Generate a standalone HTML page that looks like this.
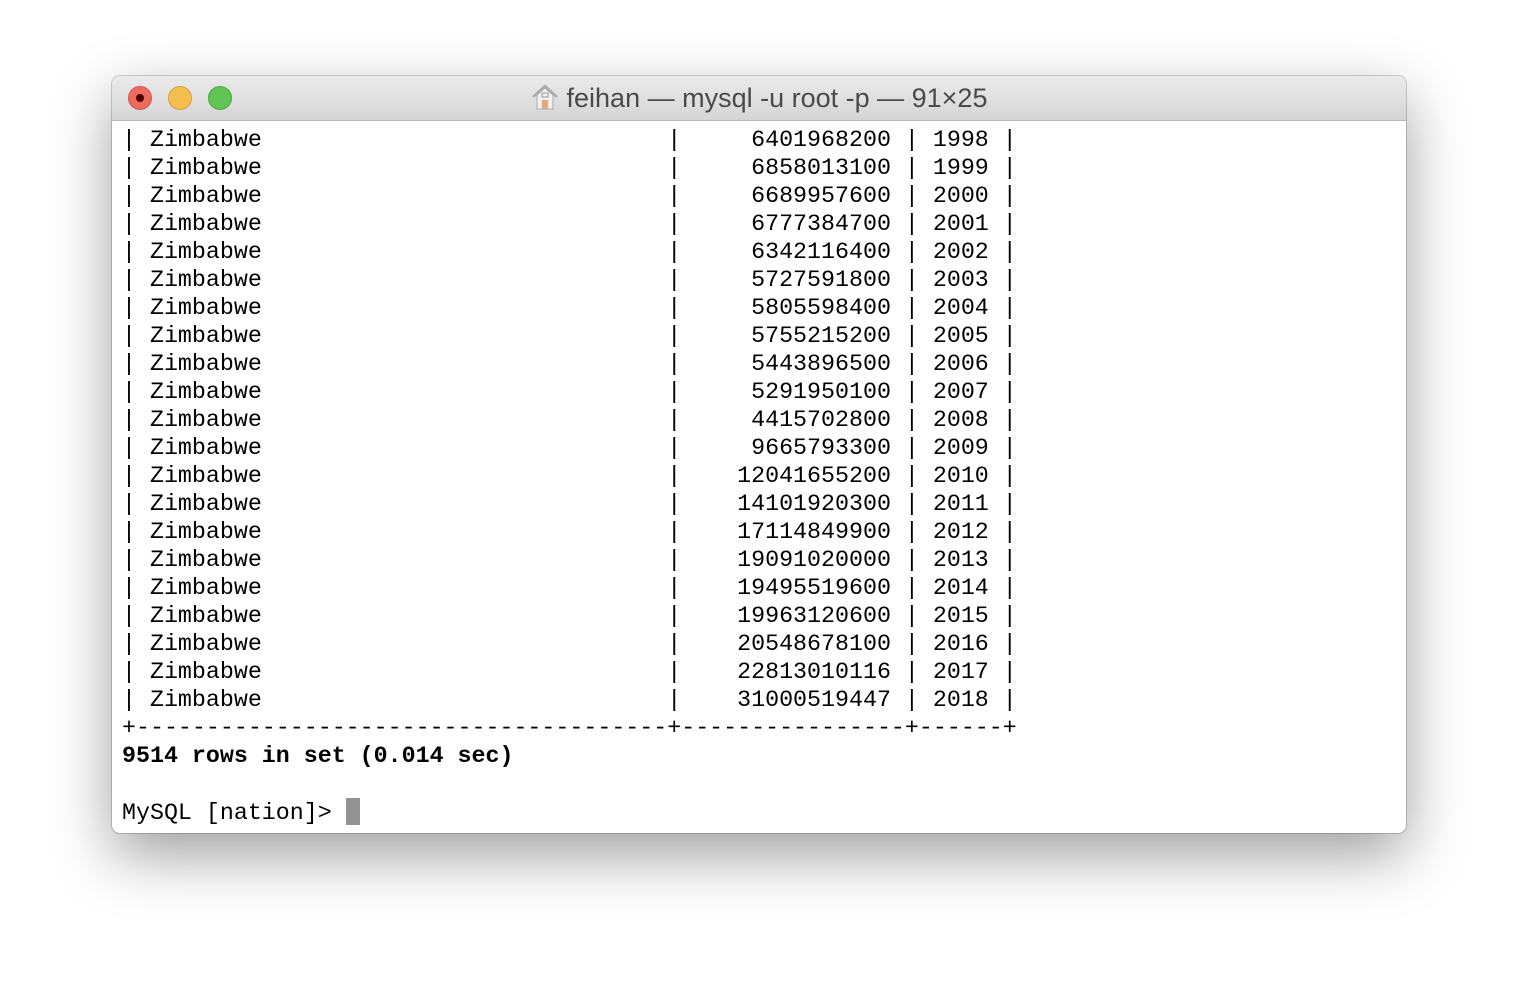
<!DOCTYPE html>
<html><head><style>
html,body{margin:0;padding:0;background:#fff;width:1518px;height:982px;overflow:hidden}
.win{position:absolute;left:112px;top:76px;width:1294px;height:757px;border-radius:8px;background:#fff;box-shadow:0 22px 60px rgba(0,0,0,.38),0 0 0 1px rgba(0,0,0,.18);overflow:hidden}
.tb{position:absolute;left:0;top:0;width:100%;height:44px;background:linear-gradient(#ebebeb,#d5d5d5);border-bottom:1px solid #b8b8b8}
.l{position:absolute;top:10px;width:24px;height:24px;border-radius:50%;box-sizing:border-box}
.title{position:absolute;left:0;right:0;top:7px;text-align:center;font:27px "Liberation Sans",sans-serif;color:#4a4a4a}
pre{position:absolute;left:10px;top:50px;margin:0;font:23.3px/28px "Liberation Mono",monospace;color:#000}
b{font-weight:bold}
.cur{display:inline-block;width:14px;height:27px;background:#929292;vertical-align:-6px}
</style></head><body>
<div class="win">
<div class="tb">
<div class="l" style="left:16px;background:#ee6a5e;border:1px solid #d0574b"><div style="position:absolute;left:7px;top:7px;width:8px;height:8px;border-radius:50%;background:#4d0000"></div></div>
<div class="l" style="left:56px;background:#f5bf4f;border:1px solid #d8a23d"></div>
<div class="l" style="left:96px;background:#61c454;border:1px solid #4ea840"></div>
<div class="title"><svg width="28" height="26" viewBox="0 0 28 26" style="vertical-align:-3px;margin-right:8px"><path d="M2 13 L14 2 L26 13" fill="none" stroke="#aaa" stroke-width="2.5"/><path d="M6 11 V25 H22 V11 L14 4Z" fill="#f0f0f0" stroke="#aaa"/><rect x="11" y="16" width="6" height="9" fill="#e2a878"/><rect x="11" y="9" width="6" height="4" fill="none" stroke="#999"/></svg>feihan — mysql -u root -p — 91×25</div>
</div>
<pre>| Zimbabwe                             |     6401968200 | 1998 |
| Zimbabwe                             |     6858013100 | 1999 |
| Zimbabwe                             |     6689957600 | 2000 |
| Zimbabwe                             |     6777384700 | 2001 |
| Zimbabwe                             |     6342116400 | 2002 |
| Zimbabwe                             |     5727591800 | 2003 |
| Zimbabwe                             |     5805598400 | 2004 |
| Zimbabwe                             |     5755215200 | 2005 |
| Zimbabwe                             |     5443896500 | 2006 |
| Zimbabwe                             |     5291950100 | 2007 |
| Zimbabwe                             |     4415702800 | 2008 |
| Zimbabwe                             |     9665793300 | 2009 |
| Zimbabwe                             |    12041655200 | 2010 |
| Zimbabwe                             |    14101920300 | 2011 |
| Zimbabwe                             |    17114849900 | 2012 |
| Zimbabwe                             |    19091020000 | 2013 |
| Zimbabwe                             |    19495519600 | 2014 |
| Zimbabwe                             |    19963120600 | 2015 |
| Zimbabwe                             |    20548678100 | 2016 |
| Zimbabwe                             |    22813010116 | 2017 |
| Zimbabwe                             |    31000519447 | 2018 |
+--------------------------------------+----------------+------+
<b>9514 rows in set (0.014 sec)</b>

MySQL [nation]> <span class="cur"></span></pre>
</div>
</body></html>
